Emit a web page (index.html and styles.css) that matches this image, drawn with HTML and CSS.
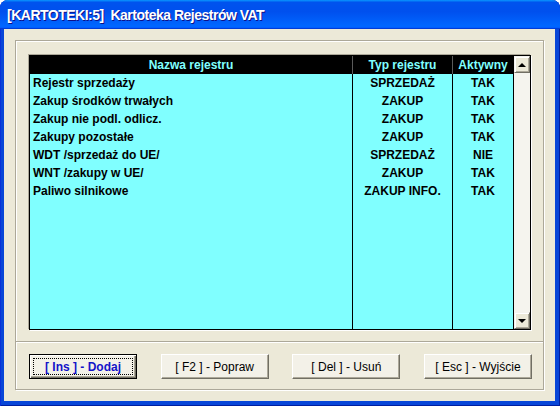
FILE: index.html
```html
<!DOCTYPE html>
<html lang="pl">
<head>
<meta charset="utf-8">
<title>Kartoteka Rejestrów VAT</title>
<link rel="stylesheet" href="styles.css">
</head>
<body>
<div class="window">
  <div class="titlebar"><span class="title">[KARTOTEKI:5]&nbsp; Kartoteka Rejestrów VAT</span></div>
  <div class="client">
    <div class="group group-list">
      <div class="list">
        <table class="grid">
          <colgroup><col class="c1"><col class="c2"><col class="c3"></colgroup>
          <thead>
            <tr><th>Nazwa rejestru</th><th>Typ rejestru</th><th>Aktywny</th></tr>
          </thead>
          <tbody>
            <tr><td>Rejestr sprzedaży</td><td>SPRZEDAŻ</td><td>TAK</td></tr>
            <tr><td>Zakup środków trwałych</td><td>ZAKUP</td><td>TAK</td></tr>
            <tr><td>Zakup nie podl. odlicz.</td><td>ZAKUP</td><td>TAK</td></tr>
            <tr><td>Zakupy pozostałe</td><td>ZAKUP</td><td>TAK</td></tr>
            <tr><td>WDT /sprzedaż do UE/</td><td>SPRZEDAŻ</td><td>NIE</td></tr>
            <tr><td>WNT /zakupy w UE/</td><td>ZAKUP</td><td>TAK</td></tr>
            <tr><td>Paliwo silnikowe</td><td>ZAKUP INFO.</td><td>TAK</td></tr>
            <tr class="filler"><td></td><td></td><td></td></tr>
          </tbody>
        </table>
        <div class="scrollbar">
          <div class="sb-btn"><span class="arrow arrow-up"></span></div>
          <div class="sb-track"></div>
          <div class="sb-btn"><span class="arrow arrow-down"></span></div>
        </div>
      </div>
    </div>
    <div class="group group-buttons">
      <button class="btn btn-default"><span class="focus">[ Ins ] - Dodaj</span></button>
      <button class="btn">[ F2 ] - Popraw</button>
      <button class="btn">[ Del ] - Usuń</button>
      <button class="btn">[ Esc ] - Wyjście</button>
    </div>
  </div>
</div>
</body>
</html>
```
FILE: styles.css
```css
* { box-sizing: border-box; }

html, body {
  margin: 0;
  padding: 0;
  width: 560px;
  height: 406px;
  overflow: hidden;
  background: #ffffff;
}

.window {
  width: 560px;
  height: 406px;
  display: flex;
  flex-direction: column;
  background: #0846d8;
  border-radius: 8px 8px 0 0;
  box-shadow: inset 1px 0 #0831d9, inset -1px 0 #001ea0, inset 0 -1px #001ea0;
}

.titlebar {
  flex: none;
  height: 29px;
  padding: 1px 0 0 7px;
  display: flex;
  align-items: center;
  border-radius: 8px 8px 0 0;
  background: linear-gradient(180deg, #0997ff, #0053ee 8%, #0050ee 40%, #0066ff 88%, #0066ff 93%, #005bff 95%, #003dd7 96%, #003dd7);
  font: bold 14px "Liberation Sans", Arial, sans-serif;
  color: #ffffff;
  text-shadow: 1px 1px #0f1089;
  letter-spacing: -0.5px;
}

.client {
  flex: 1;
  margin: 0 5px 5px 4px;
  background: #ece9d8;
  padding: 11px 11px 11px 11px;
  display: flex;
  flex-direction: column;
}

.group {
  border: 1px solid #aca899;
  box-shadow: inset 1px 1px #ffffff, 1px 1px #ffffff;
}

.group-list {
  height: 302px;
  padding: 14px 12px 11px 13px;
}

.group-buttons {
  border-top: none;
  height: 48px;
  padding: 12px 11px 10px 13px;
  display: flex;
  justify-content: space-between;
  box-shadow: 1px 1px #ffffff, inset 1px 0 #ffffff;
}

.list {
  width: 502px;
  height: 275px;
  display: flex;
  border: 1px solid #000000;
  background: #80ffff;
  box-shadow: -1px -1px 0 #aca899, 1px 1px 0 #ffffff;
}

.grid {
  width: 483px;
  height: 100%;
  table-layout: fixed;
  border-collapse: separate;
  border-spacing: 0;
  font: bold 12px "Liberation Sans", Arial, sans-serif;
}

.c1 { width: 323px; }
.c2 { width: 100px; }
.c3 { width: 60px; }

.grid th,
.grid td {
  padding: 0;
  height: 18px;
  line-height: 18px;
  text-align: center;
  white-space: nowrap;
  overflow: hidden;
  border-right: 1px solid #000000;
}

.grid th:last-child,
.grid td:last-child {
  border-right: none;
}

.grid th {
  background: #000000;
  color: #80ffff;
  border-right-color: #5a5a5a;
}

.grid td {
  color: #000000;
}

.grid td:first-child {
  text-align: left;
  padding-left: 3px;
}

.grid .filler td {
  height: auto;
}

.scrollbar {
  width: 17px;
  border-left: 1px solid #000000;
  display: flex;
  flex-direction: column;
  background: #f5f4ee;
}

.sb-btn {
  height: 17px;
  flex: none;
  display: flex;
  align-items: center;
  justify-content: center;
  background: #ece9d8;
  border: 1px solid;
  border-color: #f4f3ee #716f64 #716f64 #f4f3ee;
  box-shadow: inset 1px 1px #ffffff, inset -1px -1px #aca899;
}

.sb-track {
  flex: 1;
}

.arrow {
  width: 0;
  height: 0;
  border-left: 4px solid transparent;
  border-right: 4px solid transparent;
}

.arrow-up {
  border-bottom: 4px solid #000000;
}

.arrow-down {
  border-top: 4px solid #000000;
}

.btn {
  width: 108px;
  height: 25px;
  padding: 0;
  margin: 0;
  font: 12px "Liberation Sans", Arial, sans-serif;
  color: #000000;
  background: #f3f1e8;
  border: 1px solid;
  border-color: #ffffff #716f64 #716f64 #ffffff;
  box-shadow: inset -1px -1px #aca899;
  display: flex;
  align-items: center;
  justify-content: center;
}

.btn-default {
  border: 1px solid #000000;
  box-shadow: inset 1px 1px #ffffff, inset -1px -1px #716f64, inset -2px -2px #aca899;
  font-weight: bold;
  color: #1414c8;
  padding: 3px;
}

.btn-default .focus {
  flex: 1;
  align-self: stretch;
  display: flex;
  align-items: center;
  justify-content: center;
  border: 1px dotted #000000;
}
```
